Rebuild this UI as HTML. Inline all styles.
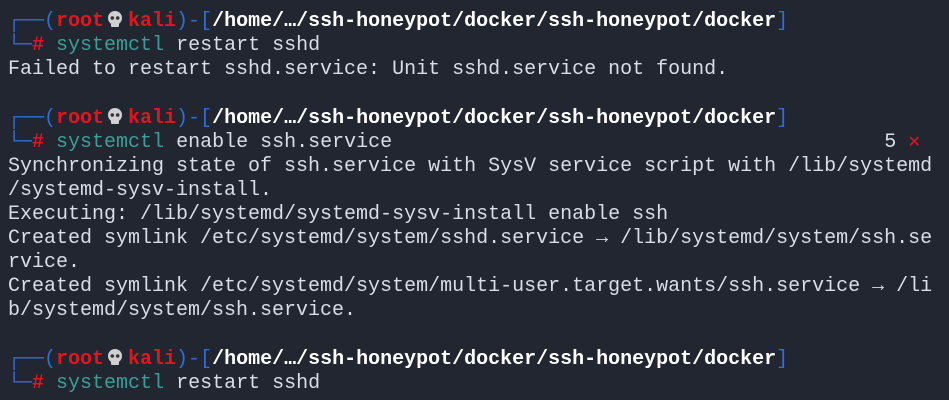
<!DOCTYPE html>
<html><head><meta charset="utf-8"><style>
html,body{margin:0;padding:0;background:#222631;width:949px;height:400px;overflow:hidden}
pre{margin:0;position:absolute;left:8px;top:9px;font-family:"Liberation Mono","DejaVu Sans Mono",monospace;font-size:20px;line-height:24px;color:#d8dde6;white-space:pre}
.b{color:#2f6ed6}.r{color:#e5141d;font-weight:bold}.w{color:#fff;font-weight:bold}.t{color:#3a9f96}
.sk{display:inline-block;width:24px;height:20px;vertical-align:-3px;position:relative}
.sk svg{position:absolute;left:2px;top:1px}
.x{color:#e5141d;font-weight:bold}
</style></head><body>
<pre><span class="b">┌──(</span><span class="r">root</span><span class="sk"><svg width="18" height="18" viewBox="0 0 18 18"><circle cx="9" cy="8" r="7" fill="#d0d0d0"/><rect x="5" y="12" width="8" height="5" rx="1" fill="#d0d0d0"/><circle cx="6.3" cy="8" r="1.8" fill="#333"/><circle cx="11.7" cy="8" r="1.8" fill="#333"/></svg></span><span class="r">kali</span><span class="b">)-[</span><span class="w">/home/…/ssh-honeypot/docker/ssh-honeypot/docker</span><span class="b">]</span>
<span class="b">└─</span><span class="r">#</span> <span class="t">systemctl</span> restart sshd
Failed to restart sshd.service: Unit sshd.service not found.

<span class="b">┌──(</span><span class="r">root</span><span class="sk"><svg width="18" height="18" viewBox="0 0 18 18"><circle cx="9" cy="8" r="7" fill="#d0d0d0"/><rect x="5" y="12" width="8" height="5" rx="1" fill="#d0d0d0"/><circle cx="6.3" cy="8" r="1.8" fill="#333"/><circle cx="11.7" cy="8" r="1.8" fill="#333"/></svg></span><span class="r">kali</span><span class="b">)-[</span><span class="w">/home/…/ssh-honeypot/docker/ssh-honeypot/docker</span><span class="b">]</span>
<span class="b">└─</span><span class="r">#</span> <span class="t">systemctl</span> enable ssh.service                                         5 <span class="x">✕</span>
Synchronizing state of ssh.service with SysV service script with /lib/systemd
/systemd-sysv-install.
Executing: /lib/systemd/systemd-sysv-install enable ssh
Created symlink /etc/systemd/system/sshd.service → /lib/systemd/system/ssh.se
rvice.
Created symlink /etc/systemd/system/multi-user.target.wants/ssh.service → /li
b/systemd/system/ssh.service.

<span class="b">┌──(</span><span class="r">root</span><span class="sk"><svg width="18" height="18" viewBox="0 0 18 18"><circle cx="9" cy="8" r="7" fill="#d0d0d0"/><rect x="5" y="12" width="8" height="5" rx="1" fill="#d0d0d0"/><circle cx="6.3" cy="8" r="1.8" fill="#333"/><circle cx="11.7" cy="8" r="1.8" fill="#333"/></svg></span><span class="r">kali</span><span class="b">)-[</span><span class="w">/home/…/ssh-honeypot/docker/ssh-honeypot/docker</span><span class="b">]</span>
<span class="b">└─</span><span class="r">#</span> <span class="t">systemctl</span> restart sshd</pre>
</body></html>
